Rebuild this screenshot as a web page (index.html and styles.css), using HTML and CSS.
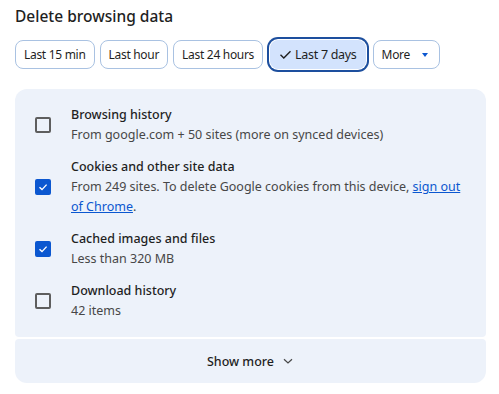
FILE: index.html
```html
<!DOCTYPE html>
<html lang="en">
<head>
    <meta charset="UTF-8">
    <title>Delete browsing data</title>
    <link rel="stylesheet" href="styles.css">
</head>
<body>
    <div class="dialog">
        <h1 class="title">Delete browsing data</h1>

        <div class="chips">
            <button class="chip">Last 15 min</button>
            <button class="chip">Last hour</button>
            <button class="chip">Last 24 hours</button>
            <button class="chip selected">
                <svg class="chip-check" width="13" height="13" viewBox="0 0 13 13"><path d="M1.5 6.8 L4.8 10 L11.5 3.2" fill="none" stroke="#1f1f1f" stroke-width="1.4"/></svg>
                Last 7 days
            </button>
            <button class="chip">More <span class="caret"></span></button>
        </div>

        <div class="card">
            <div class="items">
                <div class="item">
                    <span class="checkbox"></span>
                    <div class="item-text">
                        <div class="item-label">Browsing history</div>
                        <div class="item-sub">From google.com + 50 sites (more on synced devices)</div>
                    </div>
                </div>
                <div class="item">
                    <span class="checkbox checked">
                        <svg width="10" height="10" viewBox="0 0 10 10"><path d="M1.5 5.2 L4 7.6 L8.6 2.6" fill="none" stroke="#fff" stroke-width="1.4"/></svg>
                    </span>
                    <div class="item-text">
                        <div class="item-label">Cookies and other site data</div>
                        <div class="item-sub">From 249 sites. To delete Google cookies from this device, <a href="#">sign out of Chrome</a>.</div>
                    </div>
                </div>
                <div class="item">
                    <span class="checkbox checked">
                        <svg width="10" height="10" viewBox="0 0 10 10"><path d="M1.5 5.2 L4 7.6 L8.6 2.6" fill="none" stroke="#fff" stroke-width="1.4"/></svg>
                    </span>
                    <div class="item-text">
                        <div class="item-label">Cached images and files</div>
                        <div class="item-sub">Less than 320 MB</div>
                    </div>
                </div>
                <div class="item">
                    <span class="checkbox"></span>
                    <div class="item-text">
                        <div class="item-label">Download history</div>
                        <div class="item-sub">42 items</div>
                    </div>
                </div>
            </div>
            <div class="show-more">
                Show more
                <svg width="12" height="12" viewBox="0 0 12 12"><path d="M2 4.2 L6 8 L10 4.2" fill="none" stroke="#474747" stroke-width="1.2"/></svg>
            </div>
        </div>
    </div>
</body>
</html>
```

FILE: styles.css
```css
body {
    margin: 0;
    background-color: #ffffff;
    font-family: "Noto Sans", "Open Sans", sans-serif;
    color: #1f1f1f;
}

.dialog {
    padding: 5px 13px 0 15px;
}

.title {
    margin: 0;
    font-size: 15.5px;
    line-height: 22px;
    font-weight: 500;
}

.chips {
    display: flex;
    gap: 5px;
    margin-top: 13px;
}

.chip {
    display: flex;
    align-items: center;
    gap: 3px;
    height: 29px;
    padding: 0 8px;
    border: 1px solid #a9c2e2;
    border-radius: 8px;
    background-color: #ffffff;
    font-family: inherit;
    font-size: 12px;
    letter-spacing: -0.3px;
    color: #1f1f1f;
}

.chip.selected {
    background-color: #d3e3fd;
    border-color: #d3e3fd;
    box-shadow: 0 0 0 1px #ffffff, 0 0 0 3px #1d4f9e;
    padding: 0 8px;
    margin: 0 2px;
    font-size: 12.5px;
}

.caret {
    margin-left: 9px;
    margin-right: 3px;
    width: 0;
    height: 0;
    border-left: 3.5px solid transparent;
    border-right: 3.5px solid transparent;
    border-top: 4px solid #0b57d0;
}

.card {
    display: flex;
    flex-direction: column;
    gap: 2px;
    width: 471px;
    margin-top: 20px;
}

.items {
    display: flex;
    flex-direction: column;
    gap: 12px;
    padding: 16px 20px;
    background-color: #edf2fa;
    border-radius: 12px 12px 4px 4px;
}

.item {
    display: flex;
    align-items: center;
    gap: 20px;
}

.checkbox {
    flex: none;
    display: flex;
    align-items: center;
    justify-content: center;
    width: 16px;
    height: 16px;
    border: 2px solid #5e5e5e;
    border-radius: 2px;
    box-sizing: border-box;
}

.checkbox.checked {
    background-color: #0b57d0;
    border-color: #0b57d0;
}

.item-text {
    font-size: 12.5px;
    line-height: 20px;
}

.item-label {
    font-weight: 500;
}

.item-sub {
    color: #474747;
}

.item-sub a {
    color: #0b57d0;
}

.show-more {
    display: flex;
    align-items: center;
    justify-content: center;
    gap: 8px;
    height: 44px;
    background-color: #edf2fa;
    border-radius: 4px 4px 12px 12px;
    font-size: 12.5px;
    font-weight: 500;
}
```
